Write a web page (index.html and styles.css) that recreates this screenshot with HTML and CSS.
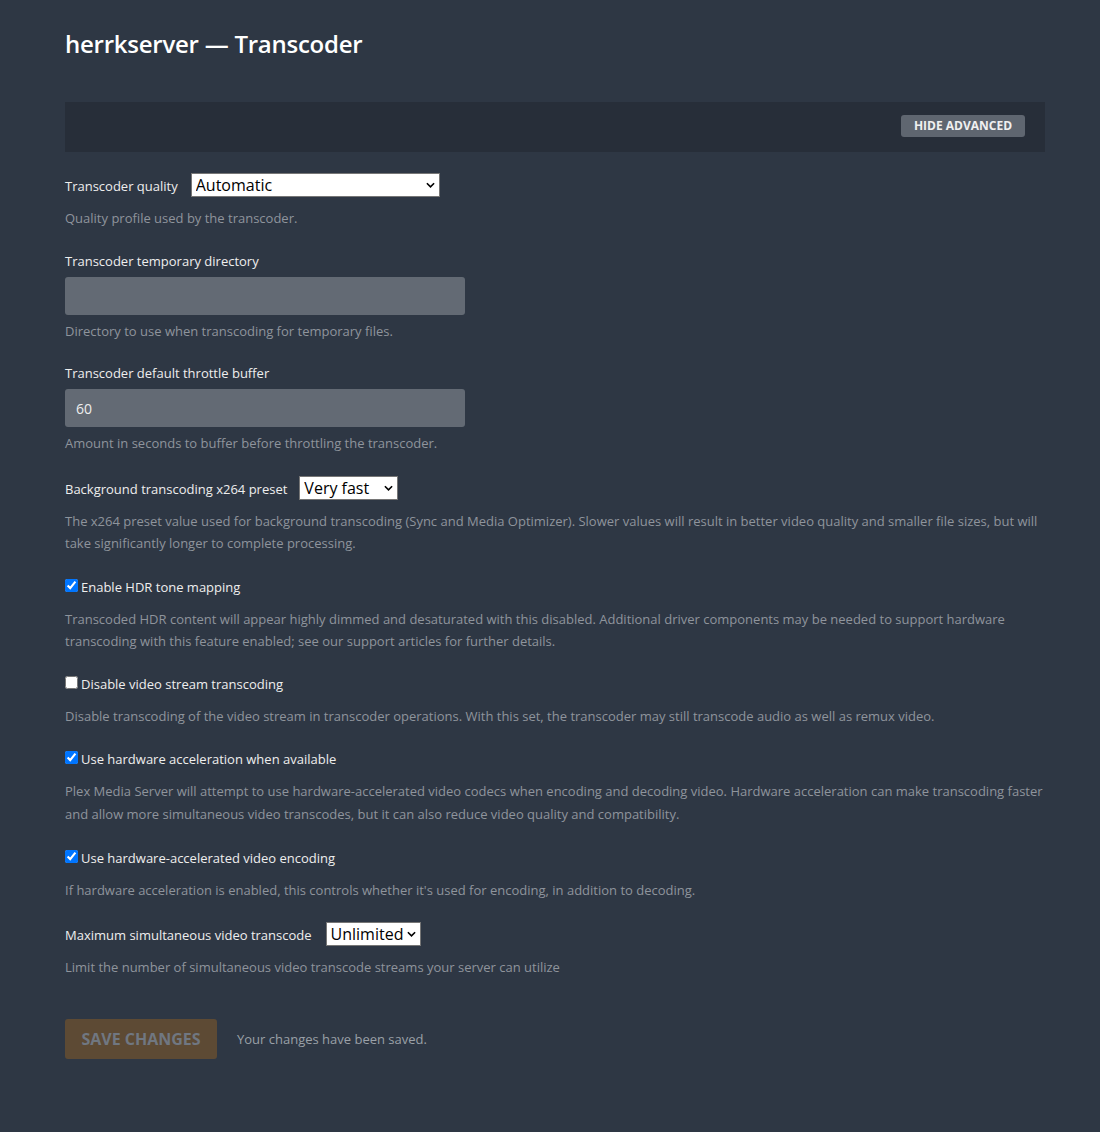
FILE: index.html
```html
<!DOCTYPE html>
<html lang="en">
<head>
<meta charset="utf-8">
<title>herrkserver — Transcoder</title>
<link rel="stylesheet" href="styles.css">
</head>
<body>
<div class="page">
  <h1 class="title">herrkserver — Transcoder</h1>

  <div class="toolbar">
    <button class="btn-advanced" type="button">HIDE ADVANCED</button>
  </div>

  <form class="settings">
    <div class="group">
      <div class="row">
        <label class="label">Transcoder quality</label>
        <span class="select-wrap sel-quality">
          <select class="select"><option>Automatic</option></select>
          <svg class="chev" viewBox="0 0 10 6" width="9" height="6"><path d="M1 1l4 4 4-4" fill="none" stroke="#000" stroke-width="1.8"/></svg>
        </span>
      </div>
      <p class="help help-sel">Quality profile used by the transcoder.</p>
    </div>

    <div class="group group-tight">
      <label class="label label-block">Transcoder temporary directory</label>
      <input class="text-input" type="text" value="">
      <p class="help help-input">Directory to use when transcoding for temporary files.</p>
    </div>

    <div class="group">
      <label class="label label-block">Transcoder default throttle buffer</label>
      <input class="text-input" type="text" value="60">
      <p class="help help-input">Amount in seconds to buffer before throttling the transcoder.</p>
    </div>

    <div class="group group-loose">
      <div class="row">
        <label class="label">Background transcoding x264 preset</label>
        <span class="select-wrap sel-preset">
          <select class="select"><option>Very fast</option></select>
          <svg class="chev" viewBox="0 0 10 6" width="9" height="6"><path d="M1 1l4 4 4-4" fill="none" stroke="#000" stroke-width="1.8"/></svg>
        </span>
      </div>
      <p class="help help-sel">The x264 preset value used for background transcoding (Sync and Media Optimizer). Slower values will result in better video quality and smaller file sizes, but will take significantly longer to complete processing.</p>
    </div>

    <div class="group">
      <label class="check"><input type="checkbox" checked><span>Enable HDR tone mapping</span></label>
      <p class="help help-check">Transcoded HDR content will appear highly dimmed and desaturated with this disabled. Additional driver components may be needed to support hardware transcoding with this feature enabled; see our support articles for further details.</p>
    </div>

    <div class="group">
      <label class="check"><input type="checkbox"><span>Disable video stream transcoding</span></label>
      <p class="help help-check">Disable transcoding of the video stream in transcoder operations. With this set, the transcoder may still transcode audio as well as remux video.</p>
    </div>

    <div class="group">
      <label class="check"><input type="checkbox" checked><span>Use hardware acceleration when available</span></label>
      <p class="help help-check help-tall">Plex Media Server will attempt to use hardware-accelerated video codecs when encoding and decoding video. Hardware acceleration can make transcoding faster and allow more simultaneous video transcodes, but it can also reduce video quality and compatibility.</p>
    </div>

    <div class="group group-tight">
      <label class="check"><input type="checkbox" checked><span>Use hardware-accelerated video encoding</span></label>
      <p class="help help-check">If hardware acceleration is enabled, this controls whether it's used for encoding, in addition to decoding.</p>
    </div>

    <div class="group">
      <div class="row">
        <label class="label">Maximum simultaneous video transcode</label>
        <span class="select-wrap sel-max">
          <select class="select"><option>Unlimited</option></select>
          <svg class="chev" viewBox="0 0 10 6" width="9" height="6"><path d="M1 1l4 4 4-4" fill="none" stroke="#000" stroke-width="1.8"/></svg>
        </span>
      </div>
      <p class="help help-sel">Limit the number of simultaneous video transcode streams your server can utilize</p>
    </div>

    <div class="actions">
      <button class="btn-save" type="button" disabled>SAVE CHANGES</button>
      <span class="saved">Your changes have been saved.</span>
    </div>
  </form>
</div>
</body>
</html>
```

FILE: styles.css
```css
html {
  background: #2e3744;
}
body {
  margin: 0;
  background: #2e3744;
  font-family: "Open Sans", "Noto Sans", sans-serif;
  color: #eeeeee;
  min-height: 1132px;
}
.page {
  width: 980px;
  padding: 28px 55px 40px 65px;
}
.title {
  margin: 0;
  font-size: 24px;
  line-height: 32px;
  font-weight: 600;
  color: #ffffff;
  letter-spacing: -0.25px;
}
.toolbar {
  margin-top: 42px;
  height: 50px;
  background: #272e39;
  display: flex;
  align-items: flex-start;
  justify-content: flex-end;
  padding: 13px 20px 0 0;
  box-sizing: border-box;
}
.btn-advanced {
  height: 22px;
  width: 124px;
  border: 0;
  border-radius: 3px;
  background: #5f6670;
  color: #f0f0f0;
  font-family: "Open Sans", sans-serif;
  font-size: 12px;
  font-weight: 700;
  padding: 0 0 1px;
}
.settings {
  margin-top: 21px;
}
.group {
  margin-bottom: 22px;
}
.group-tight {
  margin-bottom: 21px;
}
.group-loose {
  margin-bottom: 23px;
}
.row {
  display: flex;
  align-items: center;
  height: 24px;
}
.label {
  font-size: 13px;
  line-height: 20px;
  color: #eeeeee;
}
.row .label {
  position: relative;
  top: 1px;
}
.label-block {
  display: block;
}
.select-wrap {
  position: relative;
  display: inline-block;
  margin-left: 13px;
  height: 24px;
}
.select {
  -webkit-appearance: none;
  appearance: none;
  height: 24px;
  box-sizing: border-box;
  background: #ffffff;
  border: 1px solid #767676;
  border-radius: 0;
  font-family: "Open Sans", sans-serif;
  font-size: 16px;
  color: #000000;
  padding: 0 0 0 4px;
  line-height: 22px;
  margin: 0;
}
.chev {
  position: absolute;
  right: 5px;
  top: 9px;
  pointer-events: none;
}
.sel-quality .select { width: 249px; }
.sel-preset { margin-left: 12px; }
.sel-preset .select { width: 99px; }
.sel-max { margin-left: 14px; }
.sel-max .select { width: 95px; }

.text-input {
  display: block;
  margin-top: 6px;
  width: 400px;
  height: 38px;
  box-sizing: border-box;
  border: 0;
  border-radius: 3px;
  background: #636a74;
  color: #eeeeee;
  font-family: "Open Sans", sans-serif;
  font-size: 14px;
  padding: 0 11px;
}
.help {
  margin: 0;
  font-size: 13px;
  line-height: 22px;
  color: #8e949c;
}
.help-sel { margin-top: 10px; }
.help-input { margin-top: 5px; }
.help-check { margin-top: 11px; }
.help-tall { line-height: 23px; }
.check {
  display: flex;
  align-items: center;
  height: 20px;
  font-size: 13px;
  color: #eeeeee;
}
.check input {
  margin: 0 3px 0 0;
  width: 13px;
  height: 13px;
  position: relative;
  top: -2px;
}
.actions {
  margin-top: 41px;
  display: flex;
  align-items: center;
}
.btn-save {
  width: 152px;
  height: 40px;
  border: 0;
  border-radius: 3px;
  background: #5d4a34;
  color: #707781;
  font-family: "Open Sans", sans-serif;
  font-size: 16px;
  font-weight: 700;
  padding: 0;
}
.saved {
  margin-left: 20px;
  font-size: 13px;
  color: #9aa0a7;
}
```
